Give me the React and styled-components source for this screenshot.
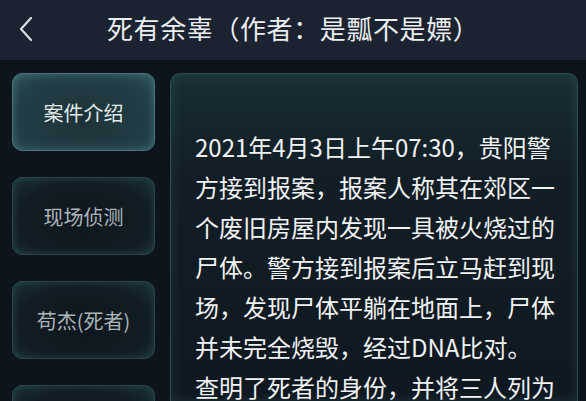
import React, { useState } from 'react';
import styled, { createGlobalStyle } from 'styled-components';

const GlobalStyle = createGlobalStyle`
  html, body {
    margin: 0;
    padding: 0;
    background: #0e141c;
  }
  body {
    font-family: "Noto Sans CJK SC", "Noto Sans", sans-serif;
  }
`;

const tabs = ['案件介绍', '现场侦测', '苟杰(死者)', '嫌疑人'];

const lines = [
  '2021年4月3日上午07:30，贵阳警',
  '方接到报案，报案人称其在郊区一',
  '个废旧房屋内发现一具被火烧过的',
  '尸体。警方接到报案后立马赶到现',
  '场，发现尸体平躺在地面上，尸体',
  '并未完全烧毁，经过DNA比对。',
  '查明了死者的身份，并将三人列为',
];

const App = () => {
  const [active, setActive] = useState(0);

  return (
    <Page>
      <GlobalStyle />
      <Header>
        <BackButton aria-label="返回">
          <svg width="16" height="26" viewBox="0 0 16 26">
            <path d="M13 2 L3 13 L13 24" fill="none" stroke="#d9dde3" strokeWidth="2.2" strokeLinecap="round" strokeLinejoin="round" />
          </svg>
        </BackButton>
        <Title>死有余辜（作者：是瓢不是嫖）</Title>
      </Header>
      <Body>
        <Sidebar>
          {tabs.map((t, i) => (
            <TabButton key={t} $active={i === active} onClick={() => setActive(i)}>
              {t}
            </TabButton>
          ))}
        </Sidebar>
        <Panel>
          {lines.map((l) => (
            <Line key={l}>{l}</Line>
          ))}
        </Panel>
      </Body>
    </Page>
  );
};

const Page = styled.div`
  width: 586px;
  height: 401px;
  overflow: hidden;
  background: #0e141c;
  display: flex;
  flex-direction: column;
`;

const Header = styled.div`
  height: 60px;
  flex-shrink: 0;
  background: #1b2230;
  display: flex;
  align-items: center;
  padding-left: 18px;
  box-sizing: border-box;
`;

const BackButton = styled.div`
  width: 16px;
  height: 26px;
  display: flex;
  margin-top: -3px;
`;

const Title = styled.div`
  margin-left: 73px;
  margin-top: -6px;
  font-size: 26px;
  letter-spacing: 0.6px;
  color: #eceef2;
  white-space: nowrap;
`;

const Body = styled.div`
  flex: 1;
  display: flex;
  gap: 15px;
  padding: 13px 8px 0 12px;
  min-height: 0;
`;

const Sidebar = styled.div`
  width: 143px;
  flex-shrink: 0;
  display: flex;
  flex-direction: column;
  gap: 26px;
`;

const TabButton = styled.div`
  height: 78px;
  flex-shrink: 0;
  box-sizing: border-box;
  border-radius: 10px;
  display: flex;
  align-items: center;
  justify-content: center;
  font-size: 20px;
  color: ${(p) => (p.$active ? '#e3eaea' : '#aab5b9')};
  border: 1px solid ${(p) => (p.$active ? '#4a7479' : '#2a4449')};
  background: ${(p) =>
    p.$active
      ? 'radial-gradient(ellipse at 50% 60%, #1d3238 0%, #213f45 70%, #2b5055 100%)'
      : 'radial-gradient(ellipse at 50% 55%, #0e161d 0%, #111d24 65%, #1a2f35 100%)'};
  box-shadow: ${(p) =>
    p.$active
      ? 'inset 0 0 10px rgba(120, 190, 195, 0.35)'
      : 'inset 0 0 9px rgba(80, 140, 150, 0.28)'};
  cursor: pointer;
`;

const Panel = styled.div`
  flex: 1;
  box-sizing: border-box;
  border-radius: 10px 10px 0 0;
  border: 1px solid #2c4c52;
  border-bottom: none;
  background: linear-gradient(180deg, #182e34 0%, #121e25 30%, #0f1820 100%);
  box-shadow: inset 0 0 12px rgba(90, 160, 170, 0.2);
  padding: 53px 0 0 24px;
  color: #f1f2f4;
  font-size: 24px;
  line-height: 40px;
  overflow: hidden;
`;

const Line = styled.div`
  white-space: nowrap;
`;

export default App;
